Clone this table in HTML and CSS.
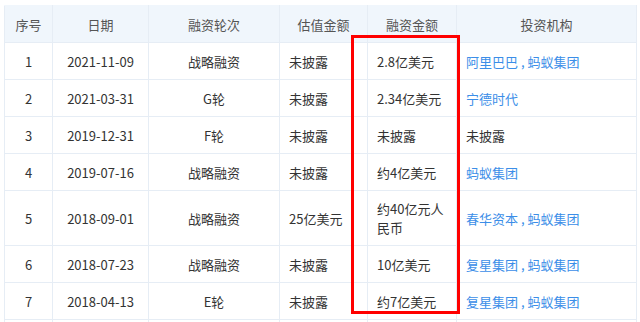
FILE: index.html
```html
<!DOCTYPE html>
<html lang="zh">
<head>
<meta charset="utf-8">
<link rel="stylesheet" href="styles.css">
</head>
<body>
<div class="wrap">
  <table class="fin">
    <colgroup>
      <col class="c1"><col class="c2"><col class="c3"><col class="c4"><col class="c5"><col class="c6">
    </colgroup>
    <thead>
      <tr><th>序号</th><th>日期</th><th>融资轮次</th><th>估值金额</th><th>融资金额</th><th>投资机构</th></tr>
    </thead>
    <tbody>
      <tr><td class="ct">1</td><td class="ct">2021-11-09</td><td class="ct">战略融资</td><td>未披露</td><td>2.8亿美元</td><td><a>阿里巴巴</a><span class="sep"> , </span><a>蚂蚁集团</a></td></tr>
      <tr><td class="ct">2</td><td class="ct">2021-03-31</td><td class="ct">G轮</td><td>未披露</td><td>2.34亿美元</td><td><a>宁德时代</a></td></tr>
      <tr><td class="ct">3</td><td class="ct">2019-12-31</td><td class="ct">F轮</td><td>未披露</td><td>未披露</td><td>未披露</td></tr>
      <tr><td class="ct">4</td><td class="ct">2019-07-16</td><td class="ct">战略融资</td><td>未披露</td><td>约4亿美元</td><td><a>蚂蚁集团</a></td></tr>
      <tr class="tall"><td class="ct">5</td><td class="ct">2018-09-01</td><td class="ct">战略融资</td><td>25亿美元</td><td><span class="wrapt">约40亿元人民币</span></td><td><a>春华资本</a><span class="sep"> , </span><a>蚂蚁集团</a></td></tr>
      <tr><td class="ct">6</td><td class="ct">2018-07-23</td><td class="ct">战略融资</td><td>未披露</td><td>10亿美元</td><td><a>复星集团</a><span class="sep"> , </span><a>蚂蚁集团</a></td></tr>
      <tr><td class="ct">7</td><td class="ct">2018-04-13</td><td class="ct">E轮</td><td>未披露</td><td>约7亿美元</td><td><a>复星集团</a><span class="sep"> , </span><a>蚂蚁集团</a></td></tr>
      <tr class="tail"><td></td><td></td><td></td><td></td><td></td><td></td></tr>
    </tbody>
  </table>
  <div class="mark"></div>
</div>
</body>
</html>
```
FILE: styles.css
```css
html, body {
  margin: 0;
  padding: 0;
  background: #fff;
  overflow: hidden;
}
body {
  font-family: "Noto Sans CJK SC", "Noto Sans", sans-serif;
  font-size: 13px;
  color: #333;
}
.wrap {
  position: relative;
  padding: 5px 4px 0 4px;
}
.fin {
  border-collapse: collapse;
  table-layout: fixed;
  width: 632px;
}
.c1 { width: 48px; }
.c2 { width: 96px; }
.c3 { width: 131px; }
.c4 { width: 88px; }
.c5 { width: 89px; }
.c6 { width: 180px; }
.fin th, .fin td {
  border: 1px solid #e6edf5;
  padding: 0 9px;
  height: 36px;
  line-height: 19px;
  vertical-align: middle;
  text-align: left;
  white-space: nowrap;
}
.fin th {
  background: #f0f6fc;
  color: #555;
  font-weight: normal;
  text-align: center;
}
.fin thead tr:first-child th {
  border-top-color: #f0f6fc;
}
.fin td.ct { text-align: center; }
.fin tr.tall td { height: 54px; }
.fin tr.tail td { height: 10px; }
.wrapt {
  display: block;
  white-space: normal;
  width: 70px;
}
.fin a {
  color: #3b8ee8;
  text-decoration: none;
}
.sep { color: #3b8ee8; }
.mark {
  position: absolute;
  left: 351px;
  top: 35px;
  width: 103px;
  height: 273px;
  border: 3px solid #ff0000;
}
```
